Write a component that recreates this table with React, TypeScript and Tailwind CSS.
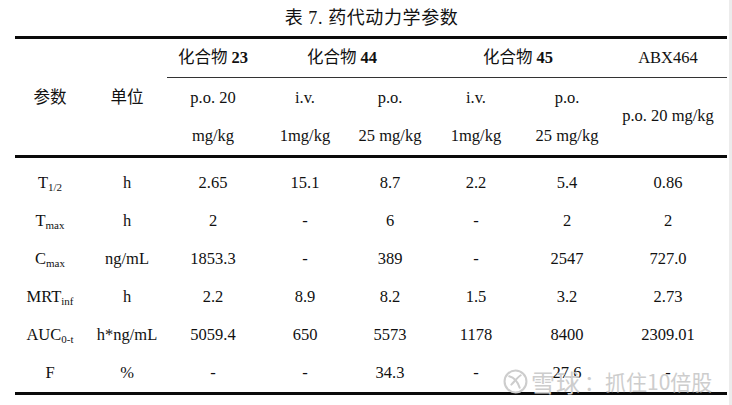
import React from "react"

const cols = "grid grid-cols-[70px_84px_88px_96px_74px_98px_84px_118px] text-center"

type Row = { name: React.ReactNode; unit: string; vals: string[] }

const Sub = ({ base, sub }: { base: string; sub: string }) => (
    <span>
        {base}
        <span className="text-[11px] relative top-[3px]">{sub}</span>
    </span>
)

const rows: Row[] = [
    { name: <Sub base="T" sub="1/2" />, unit: "h", vals: ["2.65", "15.1", "8.7", "2.2", "5.4", "0.86"] },
    { name: <Sub base="T" sub="max" />, unit: "h", vals: ["2", "-", "6", "-", "2", "2"] },
    { name: <Sub base="C" sub="max" />, unit: "ng/mL", vals: ["1853.3", "-", "389", "-", "2547", "727.0"] },
    { name: <Sub base="MRT" sub="inf" />, unit: "h", vals: ["2.2", "8.9", "8.2", "1.5", "3.2", "2.73"] },
    { name: <Sub base="AUC" sub="0-t" />, unit: "h*ng/mL", vals: ["5059.4", "650", "5573", "1178", "8400", "2309.01"] },
    { name: "F", unit: "%", vals: ["-", "-", "34.3", "-", "27.6", "-"] },
]

function Watermark() {
    return (
        <div className="absolute left-[503px] top-[369px] flex items-center gap-[3px] text-[#cdcdcd] font-['Noto_Sans_CJK_SC',sans-serif] text-[21px] leading-none">
            {/* xueqiu logo */}
            <svg width="25" height="25" viewBox="0 0 24 24" fill="none" stroke="#cdcdcd" strokeWidth="2">
                <circle cx="12" cy="12" r="10.5" />
                <path d="M6 7c4 1 8 5 10 11" strokeLinecap="round" />
                <path d="M17 6c-3 2-6 6-9 9" strokeLinecap="round" />
            </svg>
            <span className="text-[24px] tracking-[1px]">雪球</span>
            <span>：抓住10倍股</span>
        </div>
    )
}

export default function App() {
    return (
        <div className="relative w-[732px] h-[405px] bg-white text-[#111] font-['Liberation_Serif','Noto_Sans_CJK_SC',serif] text-[16.5px] border-r-[3px] border-[#ececec]">
            <div className="h-[36px] flex items-center justify-center text-[18px] tracking-[0.6px] pl-[14px]">
                表 7. 药代动力学参数
            </div>

            <div className="ml-[15px] w-[712px]">
                <div className="h-[3px] bg-[#0a0a0a]" />

                <div className={`${cols} h-[38px] items-center`}>
                    <div className="col-start-3">化合物 <b>23</b></div>
                    <div className="col-span-2">化合物 <b>44</b></div>
                    <div className="col-span-2">化合物 <b>45</b></div>
                    <div>ABX464</div>
                </div>
                <div className="ml-[152px] h-px bg-[#333]" />

                <div className={`${cols} grid-rows-[40px_37px] items-center`}>
                    <div>参数</div>
                    <div>单位</div>
                    <div>p.o. 20</div>
                    <div>i.v.</div>
                    <div>p.o.</div>
                    <div>i.v.</div>
                    <div>p.o.</div>
                    <div className="row-span-2">p.o. 20 mg/kg</div>
                    <div className="col-start-3">mg/kg</div>
                    <div>1mg/kg</div>
                    <div>25 mg/kg</div>
                    <div>1mg/kg</div>
                    <div>25 mg/kg</div>
                </div>

                <div className="h-[3px] bg-[#0a0a0a]" />

                <div className="pt-[6px]">
                    {rows.map((r, i) => (
                        <div key={i} className={`${cols} h-[38px] items-center`}>
                            <div>{r.name}</div>
                            <div>{r.unit}</div>
                            {r.vals.map((v, j) => (
                                <div key={j}>{v}</div>
                            ))}
                        </div>
                    ))}
                </div>

                <div className="h-[3px] bg-[#0a0a0a]" />
            </div>

            <Watermark />
        </div>
    )
}
